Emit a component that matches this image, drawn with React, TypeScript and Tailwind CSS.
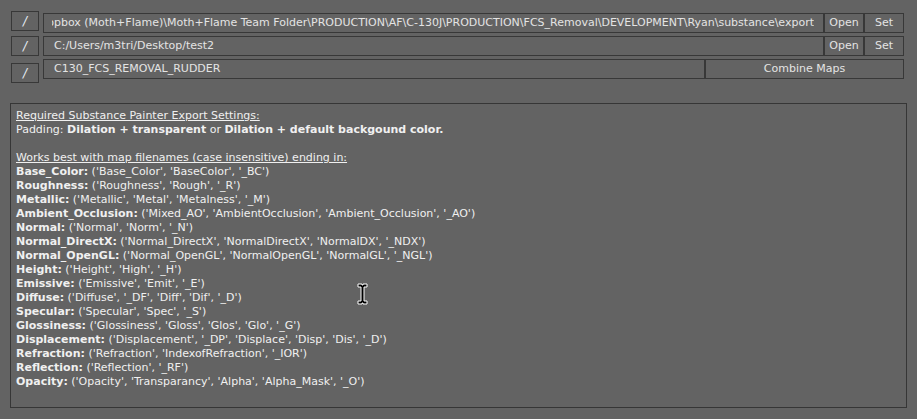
const FONT = { fontFamily: '"DejaVu Sans", "Liberation Sans", sans-serif' };

const maps: [string, string][] = [
  ["Base_Color", "('Base_Color', 'BaseColor', '_BC')"],
  ["Roughness", "('Roughness', 'Rough', '_R')"],
  ["Metallic", "('Metallic', 'Metal', 'Metalness', '_M')"],
  ["Ambient_Occlusion", "('Mixed_AO', 'AmbientOcclusion', 'Ambient_Occlusion', '_AO')"],
  ["Normal", "('Normal', 'Norm', '_N')"],
  ["Normal_DirectX", "('Normal_DirectX', 'NormalDirectX', 'NormalDX', '_NDX')"],
  ["Normal_OpenGL", "('Normal_OpenGL', 'NormalOpenGL', 'NormalGL', '_NGL')"],
  ["Height", "('Height', 'High', '_H')"],
  ["Emissive", "('Emissive', 'Emit', '_E')"],
  ["Diffuse", "('Diffuse', '_DF', 'Diff', 'Dif', '_D')"],
  ["Specular", "('Specular', 'Spec', '_S')"],
  ["Glossiness", "('Glossiness', 'Gloss', 'Glos', 'Glo', '_G')"],
  ["Displacement", "('Displacement', '_DP', 'Displace', 'Disp', 'Dis', '_D')"],
  ["Refraction", "('Refraction', 'IndexofRefraction', '_IOR')"],
  ["Reflection", "('Reflection', '_RF')"],
  ["Opacity", "('Opacity', 'Transparancy', 'Alpha', 'Alpha_Mask', '_O')"],
];

function SlashButton({ className = "" }: { className?: string }) {
  return (
    <div
      className={`w-[28px] h-[20px] border border-[#383838] flex items-center justify-center text-[12px] text-[#e8eef8] ${className}`}
    >
      <span className="italic">/</span>
    </div>
  );
}

function Btn({ label, className = "" }: { label: string; className?: string }) {
  return (
    <div
      className={`h-[20px] border border-[#383838] flex items-center justify-center text-[11px] text-[#e4e4e4] ${className}`}
    >
      {label}
    </div>
  );
}

function Field({
  text,
  className = "",
  clipRight = false,
}: {
  text: string;
  className?: string;
  clipRight?: boolean;
}) {
  return (
    <div
      className={`h-[20px] border border-[#383838] flex items-center text-[11px] text-[#e4e4e4] ${className}`}
    >
      {clipRight ? (
        <div className="ml-[8px] mr-[9px] flex-1 overflow-hidden flex justify-end">
          <span className="whitespace-nowrap">{text}</span>
        </div>
      ) : (
        <span className="pl-[10px] whitespace-nowrap">{text}</span>
      )}
    </div>
  );
}

export default function App() {
  return (
    <div className="relative w-[917px] h-[419px] bg-[#636363] overflow-hidden" style={FONT}>
      <div className="flex flex-col pl-[11px] pt-[11px]">
        {/* row 1 */}
        <div className="flex items-start h-[25px]">
          <SlashButton />
          <Field
            clipRight
            className="ml-[4px] mt-[2px] w-[781px]"
            text="Dropbox (Moth+Flame)\Moth+Flame Team Folder\PRODUCTION\AF\C-130J\PRODUCTION\FCS_Removal\DEVELOPMENT\Ryan\substance\export"
          />
          <Btn label="Open" className="mt-[2px] w-[40px]" />
          <Btn label="Set" className="mt-[2px] w-[40px]" />
        </div>
        {/* row 2 */}
        <div className="flex items-start h-[23px]">
          <SlashButton />
          <Field className="ml-[4px] w-[781px]" text="C:/Users/m3tri/Desktop/test2" />
          <Btn label="Open" className="w-[40px]" />
          <Btn label="Set" className="w-[40px]" />
        </div>
        {/* row 3 */}
        <div className="flex items-start h-[24px]">
          <SlashButton className="mt-[4px]" />
          <Field className="ml-[4px] w-[662px]" text="C130_FCS_REMOVAL_RUDDER" />
          <Btn label="Combine Maps" className="w-[199px]" />
        </div>
      </div>

      <div className="ml-[10px] mt-[20px] w-[897px] h-[305px] border border-[#363636] pl-[5px] pt-[5px] text-[11px] leading-[14px] text-[#f0f0f0]">
        <div className="underline">Required Substance Painter Export Settings:</div>
        <div>
          Padding: <b>Dilation + transparent</b> or <b>Dilation + default backgound color.</b>
        </div>
        <div className="h-[14px]" />
        <div className="underline">Works best with map filenames (case insensitive) ending in:</div>
        {maps.map(([name, vals]) => (
          <div key={name} className="whitespace-nowrap">
            <b>{name}:</b> {vals}
          </div>
        ))}
      </div>

      {/* mouse text cursor */}
      <svg className="absolute left-[357px] top-[283px]" width="12" height="22" viewBox="0 0 12 22">
        <path
          d="M1 1h4v1h1v-1h4v3h-3v14h3v3h-4v-1h-1v1h-4v-3h3v-14h-3z"
          fill="#000"
          stroke="#fff"
          strokeWidth="1"
        />
      </svg>
    </div>
  );
}
